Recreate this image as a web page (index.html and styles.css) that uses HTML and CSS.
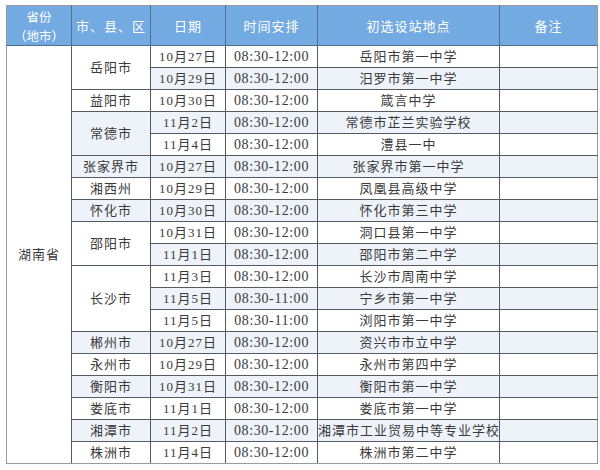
FILE: index.html
```html
<!DOCTYPE html>
<html lang="zh">
<head>
<meta charset="utf-8">
<link rel="stylesheet" href="styles.css">
</head>
<body>
<table class="sched">
  <colgroup>
    <col class="c1"><col class="c2"><col class="c3"><col class="c4"><col class="c5"><col class="c6">
  </colgroup>
  <thead>
    <tr>
      <th><span class="hl">省份</span><span class="hl">（地市）</span></th>
      <th>市、县、区</th>
      <th>日期</th>
      <th>时间安排</th>
      <th>初选设站地点</th>
      <th>备注</th>
    </tr>
  </thead>
  <tbody>
    <tr class="odd"><td class="prov" rowspan="19">湖南省</td><td class="city" rowspan="2">岳阳市</td><td>10月27日</td><td class="num">08:30-12:00</td><td>岳阳市第一中学</td><td></td></tr>
    <tr class="even"><td>10月29日</td><td class="num">08:30-12:00</td><td>汨罗市第一中学</td><td></td></tr>
    <tr class="odd"><td class="city">益阳市</td><td>10月30日</td><td class="num">08:30-12:00</td><td>箴言中学</td><td></td></tr>
    <tr class="even"><td class="city" rowspan="2">常德市</td><td>11月2日</td><td class="num">08:30-12:00</td><td>常德市芷兰实验学校</td><td></td></tr>
    <tr class="odd"><td>11月4日</td><td class="num">08:30-12:00</td><td>澧县一中</td><td></td></tr>
    <tr class="even"><td class="city">张家界市</td><td>10月27日</td><td class="num">08:30-12:00</td><td>张家界市第一中学</td><td></td></tr>
    <tr class="odd"><td class="city">湘西州</td><td>10月29日</td><td class="num">08:30-12:00</td><td>凤凰县高级中学</td><td></td></tr>
    <tr class="even"><td class="city">怀化市</td><td>10月30日</td><td class="num">08:30-12:00</td><td>怀化市第三中学</td><td></td></tr>
    <tr class="odd"><td class="city" rowspan="2">邵阳市</td><td>10月31日</td><td class="num">08:30-12:00</td><td>洞口县第一中学</td><td></td></tr>
    <tr class="even"><td>11月1日</td><td class="num">08:30-12:00</td><td>邵阳市第二中学</td><td></td></tr>
    <tr class="odd"><td class="city" rowspan="3">长沙市</td><td>11月3日</td><td class="num">08:30-12:00</td><td>长沙市周南中学</td><td></td></tr>
    <tr class="even"><td>11月5日</td><td class="num">08:30-11:00</td><td>宁乡市第一中学</td><td></td></tr>
    <tr class="odd"><td>11月5日</td><td class="num">08:30-11:00</td><td>浏阳市第一中学</td><td></td></tr>
    <tr class="even"><td class="city">郴州市</td><td>10月27日</td><td class="num">08:30-12:00</td><td>资兴市市立中学</td><td></td></tr>
    <tr class="odd"><td class="city">永州市</td><td>10月29日</td><td class="num">08:30-12:00</td><td>永州市第四中学</td><td></td></tr>
    <tr class="even"><td class="city">衡阳市</td><td>10月31日</td><td class="num">08:30-12:00</td><td>衡阳市第一中学</td><td></td></tr>
    <tr class="odd"><td class="city">娄底市</td><td>11月1日</td><td class="num">08:30-12:00</td><td>娄底市第一中学</td><td></td></tr>
    <tr class="even"><td class="city">湘潭市</td><td>11月2日</td><td class="num">08:30-12:00</td><td>湘潭市工业贸易中等专业学校</td><td></td></tr>
    <tr class="odd"><td class="city">株洲市</td><td>11月4日</td><td class="num">08:30-12:00</td><td>株洲市第二中学</td><td></td></tr>
  </tbody>
</table>
</body>
</html>
```
FILE: styles.css
```css
html, body {
  margin: 0;
  padding: 0;
  background: #ffffff;
}
body {
  padding: 5px 0 0 6px;
  font-family: "Liberation Serif", "Noto Sans CJK SC", serif;
  color: #3a3a3a;
}
.sched {
  border-collapse: collapse;
  table-layout: fixed;
  width: 591px;
  border: 1px solid #9a9a9a;
}
.c1 { width: 65px; }
.c2 { width: 79px; }
.c3 { width: 75px; }
.c4 { width: 92px; }
.c5 { width: 182px; }
.c6 { width: 98px; }
.sched th {
  background: #74aae2;
  color: #ffffff;
  font-family: "Noto Sans CJK SC", sans-serif;
  font-weight: 400;
  font-size: 13px;
  line-height: 17px;
  height: 39px;
  padding: 0;
  text-align: center;
  border: 1px solid #4f6f92;
  border-top-color: #9a9a9a;
  letter-spacing: 1px;
}
.sched th .hl {
  display: block;
  font-size: 12.5px;
  line-height: 19px;
  white-space: nowrap;
  letter-spacing: 0;
}
.sched th:first-child { border-left-color: #9a9a9a; }
.sched th:last-child { border-right-color: #9a9a9a; }
.sched td {
  height: 21px;
  padding: 0;
  text-align: center;
  font-size: 13px;
  line-height: 16px;
  border: 1px solid #555b63;
  white-space: nowrap;
  letter-spacing: 1px;
}
.sched td.num {
  letter-spacing: 0.6px;
  font-size: 14px;
}
.sched tr.odd td { background: #ffffff; }
.sched tr.even td { background: #eef3fa; }
.sched td.city { background: #eef3fa; }
.sched td.prov {
  background: #ffffff;
  border-left-color: #9a9a9a;
  border-bottom-color: #9a9a9a;
}
.sched td:last-child { border-right-color: #9a9a9a; }
.sched tr:last-child td { border-bottom-color: #9a9a9a; }
```
